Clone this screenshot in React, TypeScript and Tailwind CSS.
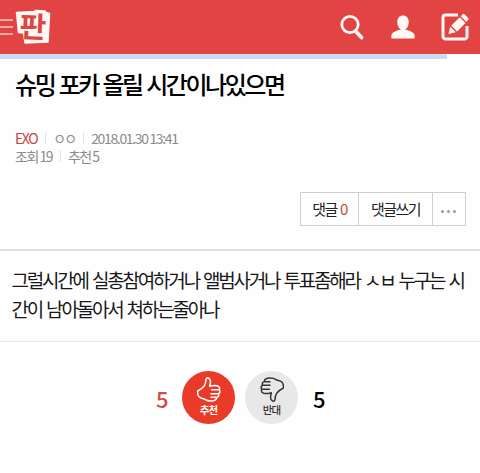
import type { ReactNode } from 'react';

const META_TOP = [
  { text: 'EXO', className: 'text-[#c5443f] tracking-[-1.4px]' },
  { text: 'ㅇㅇ', className: 'tracking-[-1.9px]' },
  { text: '2018.01.30 13:41', className: 'tracking-[-1.35px]' },
];

const META_BOTTOM = [
  { text: '조회 19', className: 'tracking-[-1.5px]' },
  { text: '추천 5', className: 'tracking-[-1.5px]' },
];

export default function App() {
  return (
    <div className="h-[473px] w-[480px] overflow-hidden bg-[#fefefe] font-['Noto_Sans_CJK_KR',sans-serif] text-black">
      <Header />
      <div className="h-[5px] w-[447px] border-t border-[#dcdcf0] bg-[#c5dbf0]" />

      <section className="h-[190px] pl-[15px]">
        <h1 className="pt-[7px] text-[24px] leading-[36px] font-medium tracking-[-2.45px] whitespace-nowrap [word-spacing:1.5px]">
          슈밍 포카 올릴 시간이나있으면
        </h1>
        <div className="mt-[27px] text-[14px] leading-[18px] text-[#8b8b8b]">
          <MetaRow items={META_TOP} />
          <MetaRow items={META_BOTTOM} />
        </div>
        <div className="mt-[27px] ml-[285px] flex h-[34px] w-[166px] border border-[#cfcfcf] text-[15px] leading-[31px] tracking-[-1.5px] text-[#222]">
          <button className="flex w-[58px] justify-center gap-[3px] border-r border-[#cfcfcf]">
            댓글 <span className="text-[#c5443f]">0</span>
          </button>
          <button className="flex w-[74px] justify-center border-r border-[#cfcfcf]">댓글쓰기</button>
          <button className="flex flex-1 items-center justify-center gap-[3px] pt-[4px] pr-[2px]" aria-label="더보기">
            <i className="size-[3px] rounded-full bg-[#999]" />
            <i className="size-[3px] rounded-full bg-[#999]" />
            <i className="size-[3px] rounded-full bg-[#999]" />
          </button>
        </div>
      </section>

      <article className="h-[93px] border-t-2 border-b border-t-[#e1e1e1] border-b-[#e8e8e8] pt-[14px] pl-[11.5px] text-[19px] leading-[29px] tracking-[-2.2px] whitespace-nowrap text-[#181818] [word-spacing:2px]">
        <p>그럴시간에 실총참여하거나 앨범사거나 투표좀해라 ㅅㅂ 누구는 시</p>
        <p>간이 남아돌아서 쳐하는줄아나</p>
      </article>

      <div className="mt-[29px] flex items-center pl-[156px] text-[22px] font-medium">
        <span className="w-[26px] pt-[2px] text-[#cd4d42]">5</span>
        <VoteButton label="추천" className="bg-[#e93b27] font-bold text-white">
          <Thumb />
        </VoteButton>
        <VoteButton label="반대" className="ml-[10px] bg-[#e8e8e8] text-[#333]">
          <Thumb className="rotate-180" />
        </VoteButton>
        <span className="ml-[15px] pt-[2px]">5</span>
      </div>
    </div>
  );
}

function Header() {
  return (
    <header className="flex h-[54px] items-center bg-[#e24444]">
      <div className="flex w-[14px] flex-col gap-[5px]">
        <i className="h-[2px] w-[13px] bg-[#f6aaa8]" />
        <i className="h-[2px] w-[13px] bg-[#f6aaa8]" />
        <i className="h-[2px] w-[13px] bg-[#f6aaa8]" />
      </div>
      <svg width="38" height="38" viewBox="14 8 38 38" className="block overflow-visible">
        <path
          d="M16.5 12.500 34 11.500 36 10.500 45 11 46 12.500 49.500 13.500 48 42 25 43 23.500 33 18.500 32.500Z"
          fill="#fff8f5"
          stroke="#fff8f5"
          strokeWidth="1.500"
          strokeLinejoin="round"
        />
        <text x="19.500" y="37.500" fontSize="29" fontWeight="700" fill="#dc4643" transform="rotate(2 33 27)">
          판
        </text>
      </svg>
      <svg width="22" height="26" viewBox="0 0 22 26" className="ml-[289px] overflow-visible" fill="none" stroke="#fff8f5">
        <circle cx="9" cy="10.500" r="8.200" strokeWidth="2.800" />
        <path d="m15 17.500 5.500 6" strokeWidth="3.800" strokeLinecap="round" />
      </svg>
      <svg width="24" height="24" viewBox="0 0 24 24" className="ml-[28px]" fill="#fff8f5">
        <path d="M12 .5c3.500 0 5.700 2.700 5.700 6.400 0 3.100-1.400 6.400-3.300 7.200v.7c4.400.9 8.500 2.400 9.200 5.400V23.500H.4v-3.300c.7-3 4.800-4.500 9.200-5.400v-.7C7.700 13.300 6.300 10 6.300 6.900 6.300 3.200 8.500.5 12 .5Z" />
      </svg>
      <svg width="28" height="28" viewBox="0 0 28 28" className="ml-[26px]">
        <path
          d="M17 2H4.500A2.500 2.500 0 0 0 2 4.500v19A2.500 2.500 0 0 0 4.500 26h19a2.500 2.500 0 0 0 2.500-2.500V13"
          fill="none"
          stroke="#fff8f5"
          strokeWidth="3"
        />
        <path
          d="m7.500 21 1.700-7.300 5.600 5.500ZM10.200 12.700 18.700 4.200l5.800 5.800-8.500 8.500ZM19.700 3.200 21.700 1.200q.9-.8 1.800 0l3.700 3.700q.8.900 0 1.800l-1.800 2.200Z"
          fill="#fff8f5"
        />
      </svg>
    </header>
  );
}

function MetaRow({ items }: { items: { text: string; className: string }[] }) {
  return (
    <div className="flex h-[18px] items-center whitespace-nowrap">
      {items.map((item, i) => (
        <div key={item.text} className="flex items-center">
          {i > 0 && <i className="mr-[7px] ml-[8px] h-[12px] w-px bg-[#e4e4e4]" />}
          <span className={item.className}>{item.text}</span>
        </div>
      ))}
    </div>
  );
}

function VoteButton({ label, className, children }: { label: string; className: string; children: ReactNode }) {
  return (
    <button className={`flex size-[53px] flex-col items-center rounded-full pt-[6px] text-[10.5px] leading-[15px] tracking-[-0.8px] ${className}`}>
      {children}
      <span>{label}</span>
    </button>
  );
}

function Thumb({ className }: { className?: string }) {
  return (
    <svg
      width="24"
      height="25"
      viewBox="0 0 72 75"
      className={className}
      fill="none"
      stroke="currentColor"
      strokeWidth="4.500"
      strokeLinejoin="round"
      strokeLinecap="round"
    >
      <path d="M2 42Q14 36 22 26 26 20 27 8 28 1 34 3 42 6 40 18L38 28Q50 24 60 26 70 29 67 38 71 46 65 50 67 59 59 62 58 72 42 72 30 72 24 67L14 64Q3 60 2 50Z" />
      <path d="M44 38H66M42 50H64M42 61H58" />
    </svg>
  );
}
